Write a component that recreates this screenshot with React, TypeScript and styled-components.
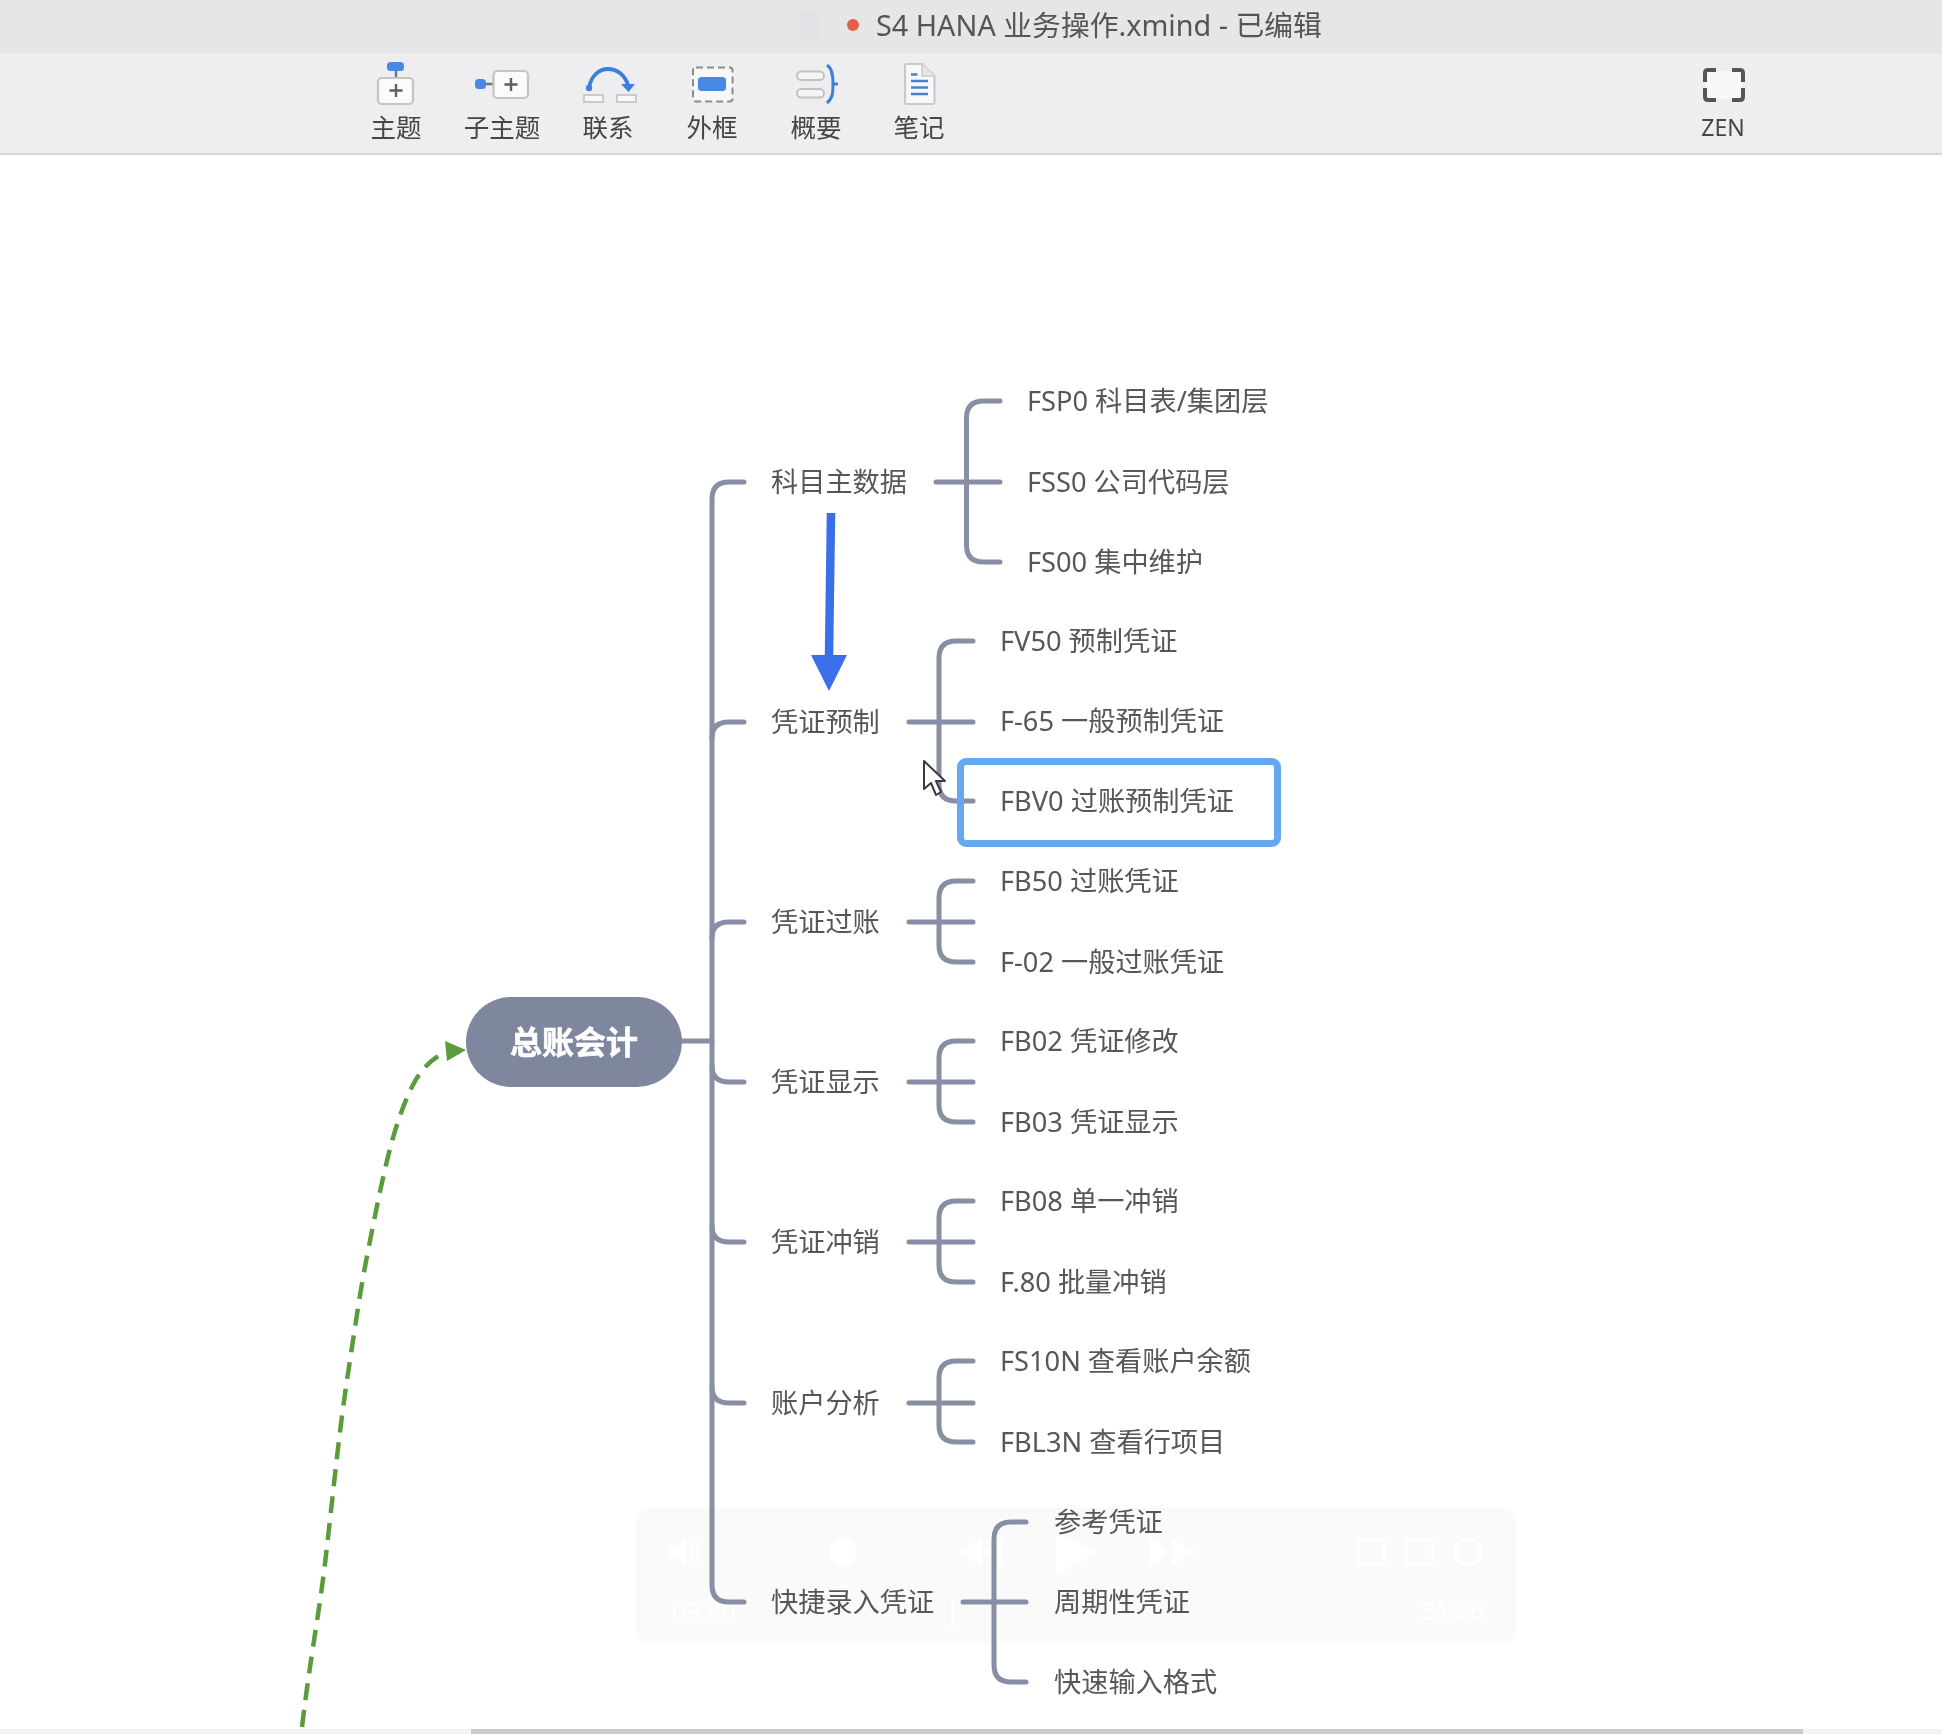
import React from "react";
import styled, { createGlobalStyle } from "styled-components";

const CANVAS_TOP = 155;
const FONT = `"Noto Sans", "Noto Sans CJK SC", sans-serif`;

const Global = createGlobalStyle`
  html, body { margin: 0; padding: 0; background: #ffffff; }
  body { font-family: ${FONT}; overflow: hidden; }
  #root { width: 1942px; height: 1734px; }
`;

const Page = styled.div`
  width: 1942px;
  height: 1734px;
  display: flex;
  flex-direction: column;
  background: #fff;
  overflow: hidden;
  filter: blur(0.55px);
`;

const TitleBar = styled.header`
  height: 53px;
  flex: none;
  display: flex;
  align-items: center;
  padding-left: 800px;
  padding-bottom: 4px;
  box-sizing: border-box;
  background: #e6e6e6;
`;
const DocGlyph = styled.span`
  width: 20px;
  height: 28px;
  border-radius: 2px;
  background: #e3e3e7;
  margin-right: 27px;
`;
const SaveDot = styled.span`
  width: 12px;
  height: 12px;
  border-radius: 50%;
  background: #e2604b;
  margin-right: 17px;
`;
const TitleText = styled.span`
  font-size: 28.8px;
  line-height: 38px;
  color: #555555;
  white-space: nowrap;
`;

const Toolbar = styled.nav`
  height: 102px;
  flex: none;
  box-sizing: border-box;
  display: flex;
  padding: 7px 167px 0 344px;
  background: #eeeef0;
  border-bottom: 2px solid #d6d6d6;
`;
const Tool = styled.div<{ $w: number; $push?: boolean }>`
  width: ${(p) => p.$w}px;
  display: flex;
  flex-direction: column;
  align-items: center;
  margin-left: ${(p) => (p.$push ? "auto" : "0")};
`;
const ToolIcon = styled.svg`
  width: 64px;
  height: 46px;
  display: block;
`;
const ToolLabel = styled.span`
  margin-top: 4px;
  font-size: 25.5px;
  line-height: 34px;
  color: #464646;
  white-space: nowrap;
`;
const ZenLabel = styled(ToolLabel)`
  font-size: 23px;
`;

const Canvas = styled.main`
  position: relative;
  flex: 1;
  overflow: hidden;
  background: #fff;
`;
const Links = styled.svg`
  position: absolute;
  inset: 0;
  width: 100%;
  height: 100%;
`;
const Player = styled.div`
  position: absolute;
  left: 636px;
  top: ${1508 - CANVAS_TOP}px;
  width: 880px;
  height: 135px;
  border-radius: 14px;
  background: #fafafa;
`;
const PlayerIcons = styled.svg`
  position: absolute;
  inset: 0;
  width: 100%;
  height: 100%;
`;
const PlayerTime = styled.span<{ $x: number }>`
  position: absolute;
  left: ${(p) => p.$x}px;
  top: 84px;
  font-size: 25px;
  line-height: 36px;
  color: #ffffff;
`;
const Node = styled.div<{ $x: number; $y: number }>`
  position: absolute;
  left: ${(p) => p.$x}px;
  top: ${(p) => p.$y - CANVAS_TOP}px;
  transform: translateY(-50%);
  font-size: 27.2px;
  line-height: 36px;
  color: #575757;
  white-space: nowrap;
`;
const Selection = styled.div`
  position: absolute;
  left: 957px;
  top: ${758 - CANVAS_TOP}px;
  width: 324px;
  height: 89px;
  box-sizing: border-box;
  border: 7px solid #64a8ef;
  border-radius: 9px;
`;
const Central = styled.div`
  position: absolute;
  left: 466px;
  top: ${997 - CANVAS_TOP}px;
  width: 216px;
  height: 90px;
  padding-bottom: 5px;
  box-sizing: border-box;
  border-radius: 45px;
  background: #7f879e;
  color: #fff;
  font-size: 32px;
  font-weight: 700;
  -webkit-text-stroke: 0.6px #fff;
  display: flex;
  align-items: center;
  justify-content: center;
`;
const Cursor = styled.svg`
  position: absolute;
  left: 920px;
  top: ${759 - CANVAS_TOP}px;
  width: 28px;
  height: 40px;
`;
const ScrollTrack = styled.div`
  height: 5px;
  flex: none;
  background: #f3f3f3;
  padding-left: 471px;
  padding-right: 139px;
`;
const ScrollThumb = styled.div`
  height: 100%;
  background: #cbcbcb;
`;

const GREY = "#888ea4";
const BLUE = "#4a88e6";

const bracket = (x1: number, vx: number, x2: number, top: number, mid: number, bottom: number) => {
  const r = 17;
  return `M${x1} ${mid} H${x2} M${x2} ${top} H${vx + r} Q${vx} ${top} ${vx} ${top + r} V${bottom - r} Q${vx} ${bottom} ${vx + r} ${bottom} H${x2}`;
};

const branches = [
  { label: "科目主数据", y: 482, from: 936, vx: 966.5, to: 1000, leafX: 1027, leaves: [["FSP0 科目表/集团层", 401], ["FSS0 公司代码层", 482], ["FS00 集中维护", 562]] },
  { label: "凭证预制", y: 722, from: 909, vx: 939, to: 973, leafX: 1000, leaves: [["FV50 预制凭证", 641], ["F-65 一般预制凭证", 721], ["FBV0 过账预制凭证", 801]] },
  { label: "凭证过账", y: 922, from: 909, vx: 939, to: 973, leafX: 1000, leaves: [["FB50 过账凭证", 881], ["F-02 一般过账凭证", 962]] },
  { label: "凭证显示", y: 1082, from: 909, vx: 939, to: 973, leafX: 1000, leaves: [["FB02 凭证修改", 1041], ["FB03 凭证显示", 1122]] },
  { label: "凭证冲销", y: 1242, from: 909, vx: 939, to: 973, leafX: 1000, leaves: [["FB08 单一冲销", 1201], ["F.80 批量冲销", 1282]] },
  { label: "账户分析", y: 1403, from: 909, vx: 939, to: 973, leafX: 1000, leaves: [["FS10N 查看账户余额", 1361], ["FBL3N 查看行项目", 1442]] },
  { label: "快捷录入凭证", y: 1602, from: 963, vx: 994, to: 1026, leafX: 1054, leaves: [["参考凭证", 1522], ["周期性凭证", 1602], ["快速输入格式", 1682]] },
] as const;

const TopicIcon = () => (
  <ToolIcon viewBox="364 60 64 46">
    <path d="M396 70V79" stroke="#777" strokeWidth="2.5" />
    <rect x="387" y="62" width="17" height="9" rx="3.5" fill={BLUE} />
    <rect x="378" y="78" width="35" height="26" rx="4" fill="#fbfbfb" stroke="#c4c4c4" strokeWidth="2.2" />
    <path d="M396 84V97M389.500 90.500H402.500" stroke="#5f5f5f" strokeWidth="2.400" />
  </ToolIcon>
);
const SubtopicIcon = () => (
  <ToolIcon viewBox="470 60 64 46">
    <path d="M485 84H494" stroke="#777" strokeWidth="2.500" />
    <rect x="475" y="79" width="11" height="10" rx="3.500" fill={BLUE} />
    <rect x="493.500" y="71" width="34.500" height="27" rx="4" fill="#fbfbfb" stroke="#c4c4c4" strokeWidth="2.2" />
    <path d="M511 78V91M504.500 84.500H517.500" stroke="#5f5f5f" strokeWidth="2.400" />
  </ToolIcon>
);
const RelationIcon = () => (
  <ToolIcon viewBox="576 60 64 46">
    <path d="M589 88C591 75 600 69 608 69C617 69 625 75 628 85" fill="none" stroke="#3f7fdc" strokeWidth="3.800" />
    <circle cx="589" cy="88" r="3.200" fill="#3f7fdc" />
    <path d="M621 84L635 84L628.500 92Z" fill="#3f7fdc" />
    <rect x="584" y="95" width="19" height="7" fill="#f8f8f8" stroke="#c6c6c6" strokeWidth="1.800" />
    <rect x="617" y="95" width="19" height="7" fill="#f8f8f8" stroke="#c6c6c6" strokeWidth="1.800" />
  </ToolIcon>
);
const BoundaryIcon = () => (
  <ToolIcon viewBox="680 60 64 46">
    <rect x="693" y="67.500" width="39.500" height="34" rx="3" fill="#f7f7f8" stroke="#8c8c8c" strokeWidth="2" strokeDasharray="7 4" />
    <rect x="698" y="77" width="28" height="14" rx="3.500" fill={BLUE} />
  </ToolIcon>
);
const SummaryIcon = () => (
  <ToolIcon viewBox="784 60 64 46">
    <rect x="797" y="71.500" width="27" height="8.500" rx="4.250" fill="#f5f5f6" stroke="#c2c2c2" strokeWidth="2" />
    <rect x="797" y="89" width="27" height="8.500" rx="4.250" fill="#f5f5f6" stroke="#c2c2c2" strokeWidth="2" />
    <path d="M827 65C833 69 833 78 833 84C833 92 833 98 827 103M833 84H838" fill="none" stroke="#3f7fdc" strokeWidth="3" />
  </ToolIcon>
);
const NotesIcon = () => (
  <ToolIcon viewBox="887 60 64 46">
    <path d="M905 66C905 65 906 64 907 64H922L934.500 76V102C934.500 103 934 104 932.500 104H907C906 104 905 103 905 102Z" fill="#f8f8f9" stroke="#cacaca" strokeWidth="2.200" />
    <path d="M922 64V76H934.500" fill="#e6e6e8" stroke="#cacaca" strokeWidth="1.500" />
    <path d="M911 74.500H917.500M911 81H928M911 87.500H928M911 94H928" stroke="#4a7fd0" strokeWidth="2.400" />
  </ToolIcon>
);
const ZenIcon = () => (
  <ToolIcon viewBox="1691 60 64 46">
    <rect x="1706" y="71" width="36" height="28" fill="#f8f8f8" />
    <path d="M1705 82V73C1705 71 1706 70 1708 70H1716M1732 70H1740C1742 70 1743 71 1743 73V82M1743 88V97C1743 99 1742 100 1740 100H1732M1716 100H1708C1706 100 1705 99 1705 97V88" fill="none" stroke="#555" strokeWidth="4" />
  </ToolIcon>
);

const tools = [
  { label: "主题", w: 104, Icon: TopicIcon },
  { label: "子主题", w: 108, Icon: SubtopicIcon },
  { label: "联系", w: 104, Icon: RelationIcon },
  { label: "外框", w: 104, Icon: BoundaryIcon },
  { label: "概要", w: 104, Icon: SummaryIcon },
  { label: "笔记", w: 102, Icon: NotesIcon },
];

export default function App() {
  return (
    <>
      <Global />
      <Page>
        <TitleBar>
          <DocGlyph />
          <SaveDot />
          <TitleText>S4 HANA 业务操作.xmind - 已编辑</TitleText>
        </TitleBar>
        <Toolbar>
          {tools.map(({ label, w, Icon }) => (
            <Tool key={label} $w={w}>
              <Icon />
              <ToolLabel>{label}</ToolLabel>
            </Tool>
          ))}
          <Tool $w={104} $push>
            <ZenIcon />
            <ZenLabel>ZEN</ZenLabel>
          </Tool>
        </Toolbar>
        <Canvas>
          <Player>
            <PlayerIcons viewBox="636 1508 880 135">
              <g fill="#ffffff">
                <path d="M669 1546H676L686 1538V1566L676 1558H669Z" />
                <path d="M690 1542Q696 1552 690 1562M695 1539Q702 1552 695 1565" fill="none" stroke="#fff" strokeWidth="2" />
                <ellipse cx="843" cy="1552" rx="13" ry="14" />
                <path d="M982 1538V1566L960 1552ZM1003 1538V1566L984 1552Z" />
                <path d="M1056 1532L1097 1552L1056 1575Z" />
                <path d="M1149 1538V1566L1170 1552ZM1172 1538V1566L1194 1552Z" />
                <rect x="951" y="1600" width="4" height="26" />
              </g>
              <g fill="none" stroke="#ffffff" strokeWidth="2.500">
                <rect x="1358" y="1540" width="26" height="24" rx="3" />
                <rect x="1406" y="1540" width="27" height="24" rx="3" />
                <circle cx="1468" cy="1552" r="13" />
              </g>
            </PlayerIcons>
            <PlayerTime $x={36}>09:40</PlayerTime>
            <PlayerTime $x={785}>31:26</PlayerTime>
          </Player>
          <Links viewBox={`0 ${CANVAS_TOP} 1942 1574`} fill="none">
            <g stroke={GREY} strokeWidth="5" strokeLinecap="round">
              <path d="M682 1041H712" />
              <path d="M744 482H729Q712 482 712 499V1585Q712 1602 729 1602H744" />
              {[722, 922].map((y) => (
                <path key={y} d={`M712 ${y + 16}Q712 ${y} 729 ${y}H744`} />
              ))}
              {[1082, 1242, 1403].map((y) => (
                <path key={y} d={`M712 ${y - 16}Q712 ${y} 729 ${y}H744`} />
              ))}
              {branches.map((b) => (
                <path
                  key={b.label}
                  d={bracket(b.from, b.vx, b.to, b.leaves[0][1], b.y, b.leaves[b.leaves.length - 1][1])}
                />
              ))}
            </g>
            <path d="M831 513L829 656" stroke="#3b6fe8" strokeWidth="8.500" />
            <path d="M811 655H847L829 691Z" fill="#3b6fe8" />
            <path
              d="M302 1727C310 1660 318 1620 324.600 1567C332 1505 338 1440 347 1380C354 1335 360 1290 369 1246C376 1210 383 1175 391.600 1142.600C398 1120 405 1100 414 1083C421 1070 430 1060 445 1052"
              stroke="#5a9c3c"
              strokeWidth="4.500"
              strokeDasharray="17 10"
            />
            <path d="M445 1041L466 1050L447 1061Z" fill="#5a9c3c" />
          </Links>
          <Selection />
          {branches.map((b) => (
            <React.Fragment key={b.label}>
              <Node $x={771} $y={b.y}>{b.label}</Node>
              {b.leaves.map(([text, y]) => (
                <Node key={text} $x={b.leafX} $y={y}>{text}</Node>
              ))}
            </React.Fragment>
          ))}
          <Central>总账会计</Central>
          <Cursor viewBox="0 0 28 40">
            <path d="M4 2L4 30L11 24L16 36L21 33L16 22L25 22Z" fill="#fff" stroke="#3c3c3c" strokeWidth="2" strokeLinejoin="round" />
          </Cursor>
        </Canvas>
        <ScrollTrack>
          <ScrollThumb />
        </ScrollTrack>
      </Page>
    </>
  );
}
